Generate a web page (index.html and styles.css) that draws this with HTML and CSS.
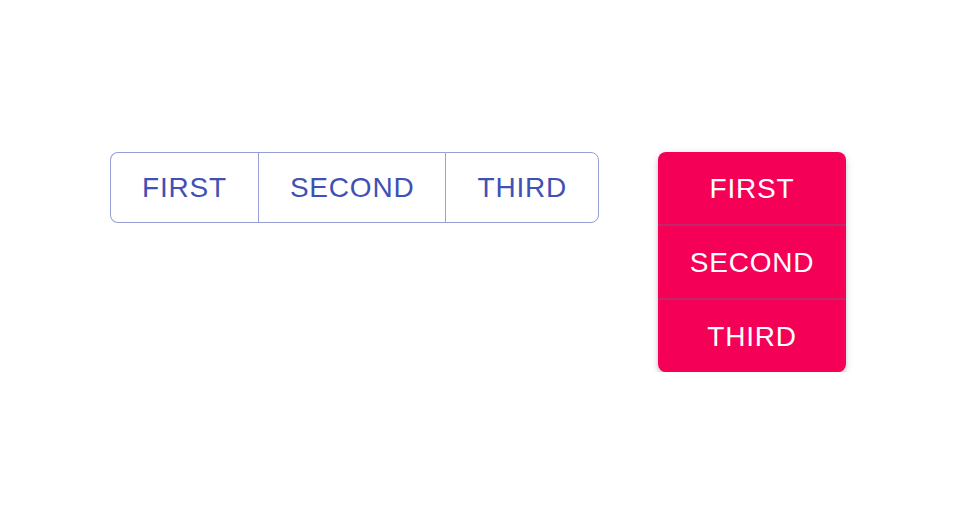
FILE: index.html
```html
<!DOCTYPE html>
<html lang="en">
<head>
  <meta charset="UTF-8" />
  <meta name="viewport" content="width=device-width, initial-scale=1.0"/>
  <title>Button Groups</title>
  <link rel="stylesheet" href="styles.css">
</head>
<body>
  <div class="demo">
    <!-- Outlined horizontal group -->
    <div class="btn-group outlined">
      <button class="btn">First</button>
      <button class="btn">Second</button>
      <button class="btn">Third</button>
    </div>

    <!-- Contained vertical group -->
    <div class="btn-group contained vertical">
      <button class="btn">First</button>
      <div class="divider"></div>
      <button class="btn">Second</button>
      <div class="divider"></div>
      <button class="btn">Third</button>
    </div>
  </div>
</body>
</html>
```

FILE: styles.css
```css
/* Base */
body {
  margin: 0;
  background: #fff;
  font-family: "Liberation Sans", Arial, sans-serif;
}
.demo {
  display: flex;
  align-items: flex-start;
  gap: 59px;
  padding: 152px 0 0 110px;
}

/* Button Group */
.btn-group {
  display: inline-flex;
  border-radius: 8px;
}
.btn-group.vertical {
  flex-direction: column;
}
.btn {
  font-family: inherit;
  font-size: 28px;
  line-height: 49px;
  letter-spacing: 0.8px;
  text-transform: uppercase;
  margin: 0;
  cursor: pointer;
  background: transparent;
  box-sizing: content-box;
}

/* Outlined variant */
.outlined .btn {
  color: #3f51b5;
  border: 1px solid rgba(63, 81, 181, 0.55);
  padding: 10px 31px;
  border-radius: 0;
}
.outlined .btn:not(:last-child) {
  border-right: none;
}
.outlined .btn:first-child {
  border-radius: 8px 0 0 8px;
}
.outlined .btn:last-child {
  border-radius: 0 8px 8px 0;
}

/* Contained variant */
.contained {
  width: 188px;
  overflow: hidden;
  background-color: #f50057;
  box-shadow: 0 6px 2px -4px rgba(0, 0, 0, 0.2),
              0 4px 4px 0 rgba(0, 0, 0, 0.14),
              0 2px 10px 0 rgba(0, 0, 0, 0.12);
}
.contained .btn {
  color: #fff;
  border: none;
  padding: 12px 0 11px;
}
.contained .divider {
  flex: none;
  height: 2px;
  background-color: #c0266a;
}
```
